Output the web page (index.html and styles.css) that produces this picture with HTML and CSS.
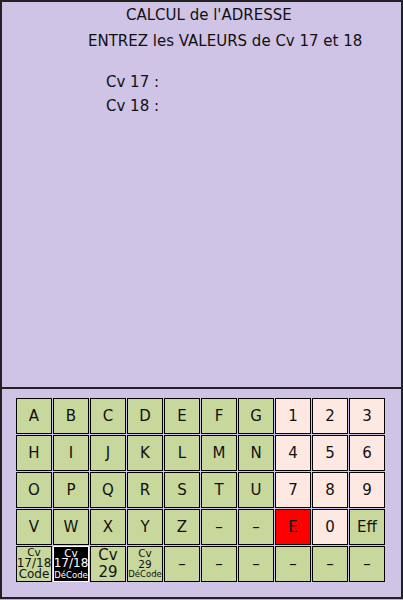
FILE: index.html
```html
<!DOCTYPE html>
<html lang="fr">
<head>
<meta charset="utf-8">
<title>Calcul de l'adresse</title>
<link rel="stylesheet" href="styles.css">
</head>
<body>
<div class="screen">
  <section class="display">
    <div class="title">CALCUL de l'ADRESSE</div>
    <div class="prompt">ENTREZ les VALEURS de Cv 17 et 18</div>
    <div class="field first">Cv 17 :</div>
    <div class="field">Cv 18 :</div>
  </section>
  <section class="keypad">
    <div class="keys">
      <div class="key">A</div><div class="key">B</div><div class="key">C</div><div class="key">D</div><div class="key">E</div><div class="key">F</div><div class="key">G</div>
      <div class="key num">1</div><div class="key num">2</div><div class="key num">3</div>

      <div class="key">H</div><div class="key">I</div><div class="key">J</div><div class="key">K</div><div class="key">L</div><div class="key">M</div><div class="key">N</div>
      <div class="key num">4</div><div class="key num">5</div><div class="key num">6</div>

      <div class="key">O</div><div class="key">P</div><div class="key">Q</div><div class="key">R</div><div class="key">S</div><div class="key">T</div><div class="key">U</div>
      <div class="key num">7</div><div class="key num">8</div><div class="key num">9</div>

      <div class="key">V</div><div class="key">W</div><div class="key">X</div><div class="key">Y</div><div class="key">Z</div><div class="key">–</div><div class="key">–</div>
      <div class="key err">E</div><div class="key num">0</div><div class="key">Eff</div>

      <div class="key multi"><span class="s11">Cv</span><span class="s12">17/18</span><span class="s12">Code</span></div>
      <div class="key multi active"><span class="s11">Cv</span><span class="s12">17/18</span><span class="s8">DéCode</span></div>
      <div class="key multi big"><span>Cv</span><span>29</span></div>
      <div class="key multi"><span class="s11">Cv</span><span class="s11">29</span><span class="s8">DéCode</span></div>
      <div class="key">–</div><div class="key">–</div><div class="key">–</div><div class="key">–</div><div class="key">–</div><div class="key">–</div>
    </div>
  </section>
</div>
</body>
</html>
```
FILE: styles.css
```css
html, body {
  margin: 0;
  padding: 0;
  background: #b9b4c4;
}

.screen {
  width: 403px;
  height: 599px;
  display: flex;
  flex-direction: column;
  font-family: "DejaVu Sans", sans-serif;
  color: #111;
}

.display {
  box-sizing: border-box;
  height: 389px;
  border: 2px solid #222;
  background: #cfc4e6;
  padding-top: 3px;
  font-size: 15px;
  line-height: 20px;
}

.title {
  padding-left: 124px;
}

.prompt {
  margin-top: 6px;
  padding-left: 86px;
}

.field {
  margin-top: 4px;
  padding-left: 104px;
}

.field.first {
  margin-top: 21px;
}

.keypad {
  box-sizing: border-box;
  height: 210px;
  border: 2px solid #222;
  border-top: none;
  background: #cfc4e6;
  padding: 9px 0 0 14px;
}

.keys {
  display: grid;
  grid-template-columns: repeat(10, 36px);
  grid-auto-rows: 36px;
  gap: 1px;
}

.key {
  box-sizing: border-box;
  border: 1px solid #000;
  background: #c8d89c;
  display: flex;
  align-items: center;
  justify-content: center;
  font-size: 15px;
  line-height: 1;
  color: #111;
}

.key.num {
  background: #fde8e2;
}

.key.err {
  background: #ff0000;
}

/* stacked labels on the Cv keys */
.key.multi {
  flex-direction: column;
  white-space: nowrap;
}

.key.multi span {
  display: block;
  text-align: center;
}

.key.multi .s11 {
  font-size: 10.5px;
  line-height: 10.5px;
}

.key.multi .s12 {
  font-size: 12px;
  line-height: 11.5px;
}

.key.multi .s8 {
  font-size: 8.5px;
  line-height: 11px;
}

.key.big span {
  font-size: 15px;
  line-height: 17px;
}

.key.active {
  background: #000;
  color: #fff;
  border-color: #fff;
}
```
